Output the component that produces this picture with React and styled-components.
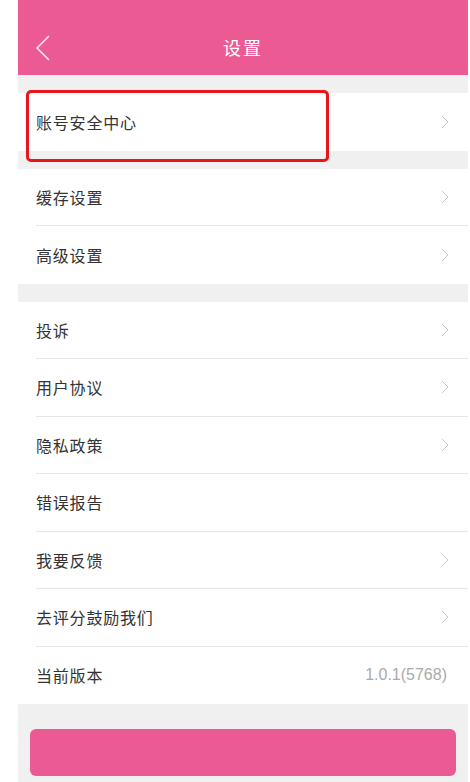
import styled, { createGlobalStyle } from "styled-components";

const GlobalStyle = createGlobalStyle`
  html, body {
    margin: 0;
    padding: 0;
    background: #ffffff;
  }
  body {
    font-family: "Noto Sans CJK SC", "Noto Sans", sans-serif;
  }
`;

const groups = [
  [{ label: "账号安全中心", arrow: true, marked: true }],
  [
    { label: "缓存设置", arrow: true },
    { label: "高级设置", arrow: true },
  ],
  [
    { label: "投诉", arrow: true },
    { label: "用户协议", arrow: true },
    { label: "隐私政策", arrow: true },
    { label: "错误报告" },
    { label: "我要反馈", arrow: true },
    { label: "去评分鼓励我们", arrow: true },
    { label: "当前版本", value: "1.0.1(5768)" },
  ],
];

const BackIcon = () => (
  <svg width="16" height="26" viewBox="0 0 16 26">
    <path d="M14 1 L2 13 L14 25" fill="none" stroke="#fbe3ec" strokeWidth="1.6" />
  </svg>
);

const Chevron = () => (
  <svg width="8" height="14" viewBox="0 0 8 14">
    <path d="M1 1 L7 7 L1 13" fill="none" stroke="#c8c8c8" strokeWidth="1" />
  </svg>
);

export default function App() {
  return (
    <>
      <GlobalStyle />
      <StyledPage>
        <StyledHeader>
          <StyledBack>
            <BackIcon />
          </StyledBack>
          <StyledTitle>设置</StyledTitle>
        </StyledHeader>

        {groups.map((group, gi) => (
          <StyledGroup key={gi}>
            {group.map((item) => (
              <StyledRow key={item.label}>
                <StyledRowInner>
                  <StyledLabel>{item.label}</StyledLabel>
                  {item.value && <StyledValue>{item.value}</StyledValue>}
                  {item.arrow && <Chevron />}
                </StyledRowInner>
                {item.marked && <StyledMark />}
              </StyledRow>
            ))}
          </StyledGroup>
        ))}

        <StyledFooter>
          <StyledButton />
        </StyledFooter>
      </StyledPage>
    </>
  );
}

const StyledPage = styled.div`
  margin-left: 18px;
  width: 450px;
  min-height: 782px;
  background: #f0f0f0;
  display: flex;
  flex-direction: column;
`;

const StyledHeader = styled.div`
  height: 75px;
  background: #ec5a93;
  position: relative;
  display: flex;
  align-items: center;
  justify-content: center;
  padding-top: 20px;
  box-sizing: border-box;
`;

const StyledBack = styled.div`
  position: absolute;
  left: 17px;
  top: 35px;
  display: flex;
`;

const StyledTitle = styled.div`
  color: #ffffff;
  font-size: 18px;
  letter-spacing: 2px;
  margin-top: -2px;
`;

const StyledGroup = styled.div`
  margin-top: 18px;
  background: #ffffff;
`;

const StyledRow = styled.div`
  position: relative;
  height: 57.5px;
  padding-left: 18px;
  box-sizing: border-box;

  &:not(:last-child) > div:first-child {
    border-bottom: 1px solid #e6e6e6;
  }
`;

const StyledRowInner = styled.div`
  height: 100%;
  box-sizing: border-box;
  display: flex;
  align-items: center;
  padding-right: 19px;
`;

const StyledLabel = styled.div`
  flex: 1;
  font-size: 16px;
  letter-spacing: 0.8px;
  color: #333333;
`;

const StyledValue = styled.div`
  font-family: "Liberation Sans", "Noto Sans", sans-serif;
  font-size: 16px;
  color: #aaaaaa;
  margin-right: 2px;
`;

const StyledMark = styled.div`
  position: absolute;
  left: 8px;
  top: -3px;
  width: 303px;
  height: 72px;
  border: 3.5px solid #e8161b;
  border-radius: 5px;
  box-sizing: border-box;
`;

const StyledFooter = styled.div`
  flex: 1;
  padding: 25px 12px 6px;
`;

const StyledButton = styled.div`
  height: 47px;
  background: #ec5a93;
  border-radius: 6px;
`;
